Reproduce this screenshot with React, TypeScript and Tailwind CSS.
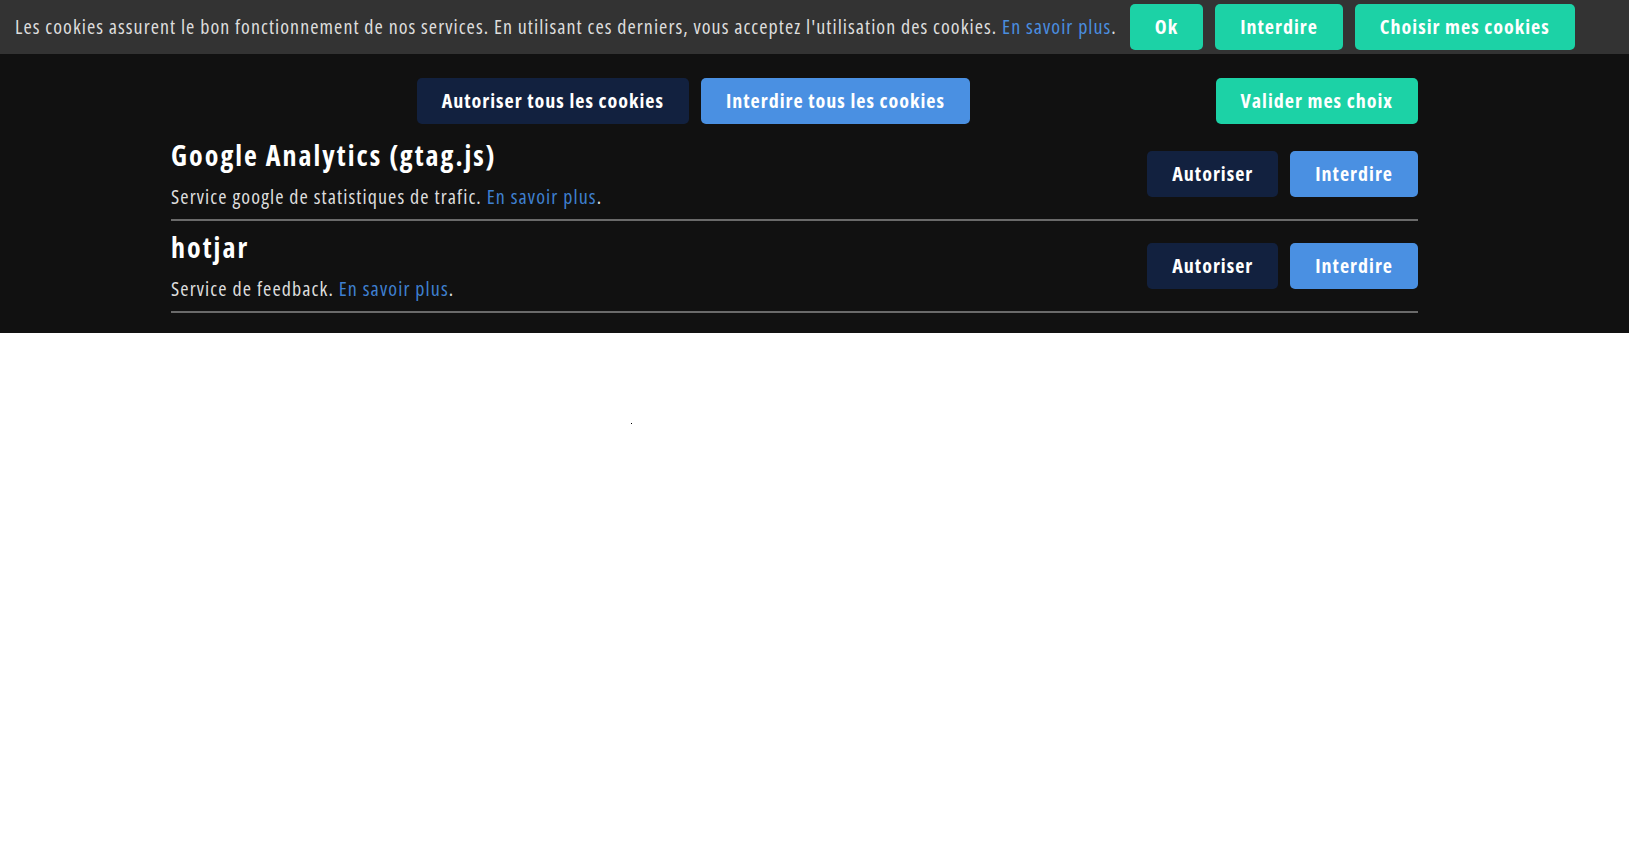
export default function App() {
  const teal = "h-[46px] rounded-[5px] bg-[#1cd2a6] px-[25px] text-[20px] font-bold tracking-[1px] text-white whitespace-nowrap";
  const navy = "h-[46px] rounded-[5px] bg-[#12213f] px-[25px] text-[20px] font-bold tracking-[1px] text-white whitespace-nowrap";
  const blue = "h-[46px] rounded-[5px] bg-[#4a90e2] px-[25px] text-[20px] font-bold tracking-[1px] text-white whitespace-nowrap";

  const services = [
    { name: "Google Analytics (gtag.js)", desc: "Service google de statistiques de trafic." },
    { name: "hotjar", desc: "Service de feedback." },
  ];

  return (
    <div className="min-h-screen bg-white font-['Open_Sans',sans-serif] font-stretch-condensed">
      <div className="flex h-[54px] items-center bg-[#333333] pl-[15px]">
        <p className="whitespace-nowrap text-[20px] tracking-[1.05px] text-[#dddddd]">
          Les cookies assurent le bon fonctionnement de nos services. En utilisant ces derniers, vous acceptez l'utilisation des cookies.{" "}
          <a className="text-[#4a8ee0]">En savoir plus</a>.
        </p>
        <div className="ml-[13px] flex gap-[12px]">
          <button className={teal}>Ok</button>
          <button className={teal}>Interdire</button>
          <button className={teal}>Choisir mes cookies</button>
        </div>
      </div>

      <div className="bg-[#111111] pt-6 pb-5">
        <div className="ml-[171px] w-[1247px]">
          <div className="flex h-[46px]">
            <div className="flex flex-1 justify-center gap-[12px]">
              <button className={navy}>Autoriser tous les cookies</button>
              <button className={blue}>Interdire tous les cookies</button>
            </div>
            <button className={teal}>Valider mes choix</button>
          </div>

          <div className="mt-[5px]">
            {services.map((s) => (
              <div key={s.name} className="flex items-center border-b-2 border-[#6a6a6a]">
                <div className="flex-1 pt-2 pb-2">
                  <h3 className="text-[28px] leading-[36px] font-bold tracking-[2px] text-white">{s.name}</h3>
                  <p className="mt-[10px] text-[20px] leading-[28px] tracking-[1.1px] text-[#dddddd]">
                    {s.desc} <a className="text-[#3f80d0]">En savoir plus</a>.
                  </p>
                </div>
                <div className="flex gap-[12px]">
                  <button className={navy}>Autoriser</button>
                  <button className={blue}>Interdire</button>
                </div>
              </div>
            ))}
          </div>
        </div>
      </div>

      <div className="ml-[631px] mt-[90px] h-px w-px bg-black" />
    </div>
  );
}
